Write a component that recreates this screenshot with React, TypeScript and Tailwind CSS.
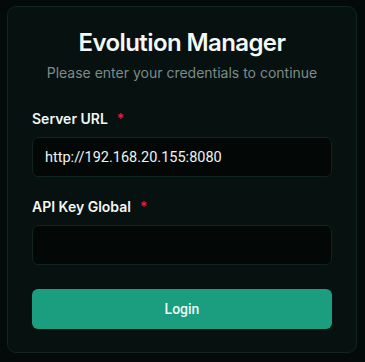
import { useState } from 'react';

const Field = ({ label, value, onChange }: { label: string; value: string; onChange: (v: string) => void }) => (
  <div className="flex flex-col">
    <label className="mb-[8px] text-sm font-semibold leading-5 text-[#f2f6f5]">
      {label}
      <span className="ml-[9px] text-[#e11d48]">*</span>
    </label>
    <input
      value={value}
      onChange={(e) => onChange(e.target.value)}
      className="h-10 w-full rounded-md border border-[#11241f] bg-[#030807] px-3 font-[Roboto,sans-serif] text-[14.5px] text-[#eef3f2] outline-none"
    />
  </div>
);

export default function App() {
  const [url, setUrl] = useState('http://192.168.20.155:8080');
  const [key, setKey] = useState('');

  return (
    <div className="h-[362px] w-[365px] bg-[#040a09] pt-[6px] pl-[7px]" style={{ fontFamily: 'Inter, "Noto Sans", sans-serif' }}>
      <div className="w-[350px] h-[347px] rounded-[9px] border border-[#10251f] bg-[#061110] px-6 pt-5 pb-6">
        <div className="text-center">
          <h1 className="text-2xl font-semibold leading-8 tracking-tight text-[#f4f8f7]">Evolution Manager</h1>
          <p className="mt-1 text-sm leading-5 text-[#7d8c88]">Please enter your credentials to continue</p>
        </div>
        <div className="mt-[26px] flex flex-col gap-5">
          <Field label="Server URL" value={url} onChange={setUrl} />
          <Field label="API Key Global" value={key} onChange={setKey} />
        </div>
        <button className="mt-6 h-10 w-full rounded-md bg-[#1a9e7f] font-[Roboto,sans-serif] text-sm font-medium text-[#eef8f5]">
          Login
        </button>
      </div>
    </div>
  );
}
